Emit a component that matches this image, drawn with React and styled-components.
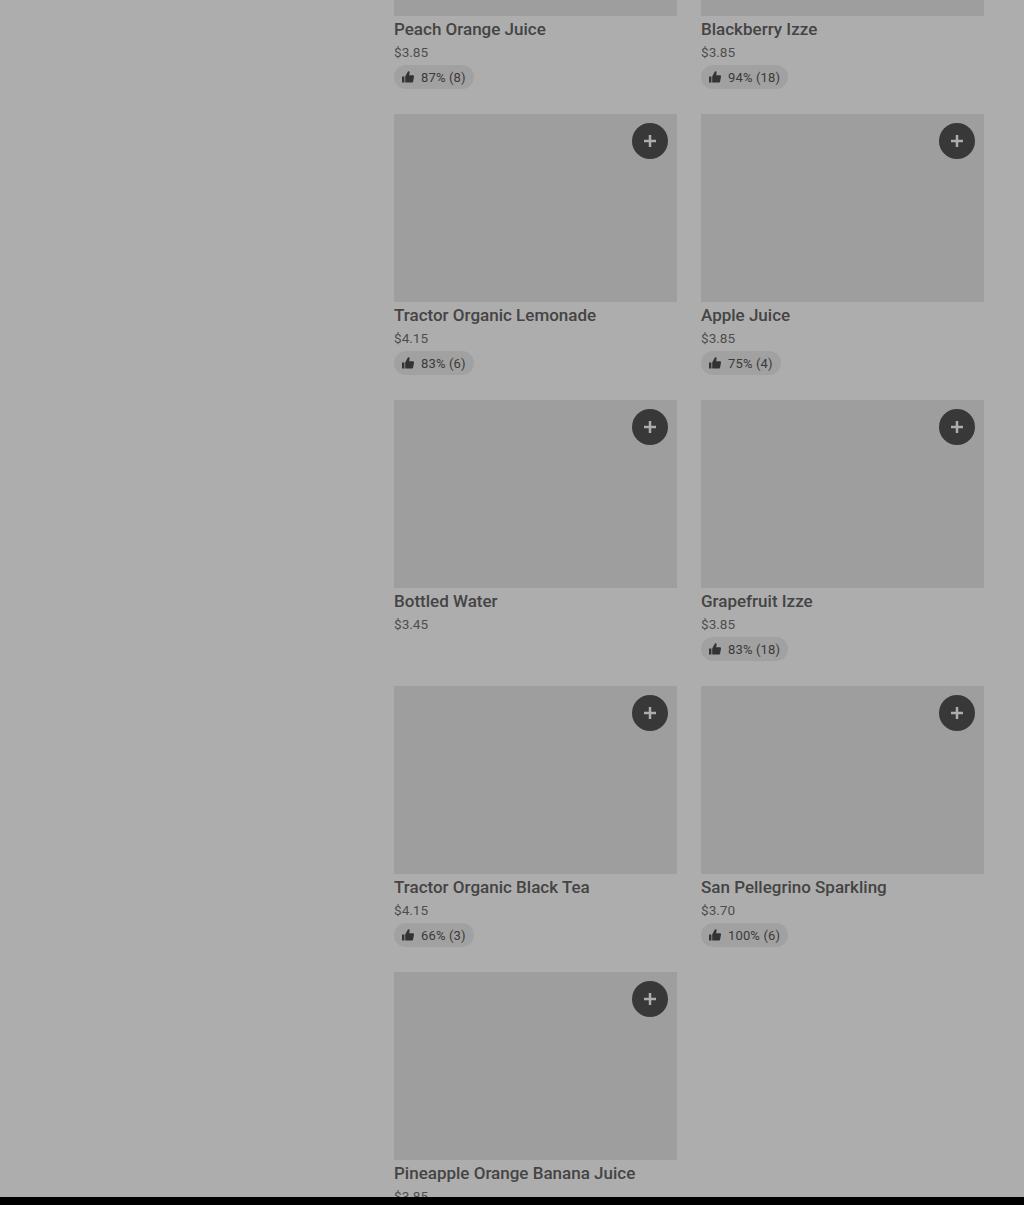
import React from "react";
import styled, { createGlobalStyle } from "styled-components";

const Global = createGlobalStyle`
  html, body { margin: 0; padding: 0; background: #000; }
  body { height: 1205px; overflow: hidden; font-family: Roboto, "Liberation Sans", sans-serif; }
`;

const Page = styled.main`
  height: 1197px;
  overflow: hidden;
  background: #adadad;
  padding-left: 394px;
  padding-right: 40px;
`;

const Grid = styled.div`
  display: grid;
  grid-template-columns: 283px 283px;
  column-gap: 24px;
  grid-auto-rows: 286px;
  margin-top: -172px;
`;

const Card = styled.article`
  display: flex;
  flex-direction: column;
  align-items: flex-start;
`;

const Media = styled.div`
  position: relative;
  align-self: stretch;
  height: 188px;
  flex: none;
  background: #9e9e9e;
`;

const AddButton = styled.button`
  position: absolute;
  top: 9px;
  right: 9px;
  width: 36px;
  height: 36px;
  padding: 0;
  border: 0;
  border-radius: 50%;
  background: #383838;
  color: #adadad;
  display: flex;
  align-items: center;
  justify-content: center;
`;

const Name = styled.div`
  margin-top: 1px;
  font-size: 17px;
  line-height: 24px;
  font-weight: 500;
  color: #444;
`;

const Price = styled.div`
  margin-top: 1px;
  font-size: 13.6px;
  line-height: 20px;
  color: #4d4d4d;
`;

const Rating = styled.div`
  margin-top: 3px;
  height: 24px;
  padding: 0 8px;
  border-radius: 12px;
  background: #a1a1a1;
  display: flex;
  align-items: center;
  gap: 7px;
  font-size: 13px;
  letter-spacing: 0.15px;
  color: #3a3a3a;
`;

const PlusIcon = () => (
  <svg width="12" height="12" viewBox="0 0 12 12" fill="currentColor" aria-hidden="true">
    <path d="M4.75 0h2.5v4.75H12v2.5H7.25V12h-2.5V7.25H0v-2.5h4.75z" />
  </svg>
);

const ThumbIcon = () => (
  <svg width="12" height="12" viewBox="0 0 12 12" fill="#333" aria-hidden="true">
    <path d="M0 5.5h2.4V11.5H0zM3.2 5.5 5.6 1c.2-.5.5-.8 1-.8.7 0 1.1.6 1 1.3L7.2 4.2H11c.7 0 1.1.6 1 1.2l-.9 5c-.1.6-.6 1.1-1.2 1.1H3.2z" />
  </svg>
);

const items = [
  ["Peach Orange Juice", "$3.85", "87% (8)"],
  ["Blackberry Izze", "$3.85", "94% (18)"],
  ["Tractor Organic Lemonade", "$4.15", "83% (6)"],
  ["Apple Juice", "$3.85", "75% (4)"],
  ["Bottled Water", "$3.45", null],
  ["Grapefruit Izze", "$3.85", "83% (18)"],
  ["Tractor Organic Black Tea", "$4.15", "66% (3)"],
  ["San Pellegrino Sparkling", "$3.70", "100% (6)"],
  ["Pineapple Orange Banana Juice", "$3.85", null],
];

export default function App() {
  return (
    <>
      <Global />
      <Page>
        <Grid>
          {items.map(([name, price, rating]) => (
            <Card key={name}>
              <Media>
                <AddButton aria-label={`Add ${name}`}>
                  <PlusIcon />
                </AddButton>
              </Media>
              <Name>{name}</Name>
              <Price>{price}</Price>
              {rating && (
                <Rating>
                  <ThumbIcon />
                  <span>{rating}</span>
                </Rating>
              )}
            </Card>
          ))}
        </Grid>
      </Page>
    </>
  );
}
